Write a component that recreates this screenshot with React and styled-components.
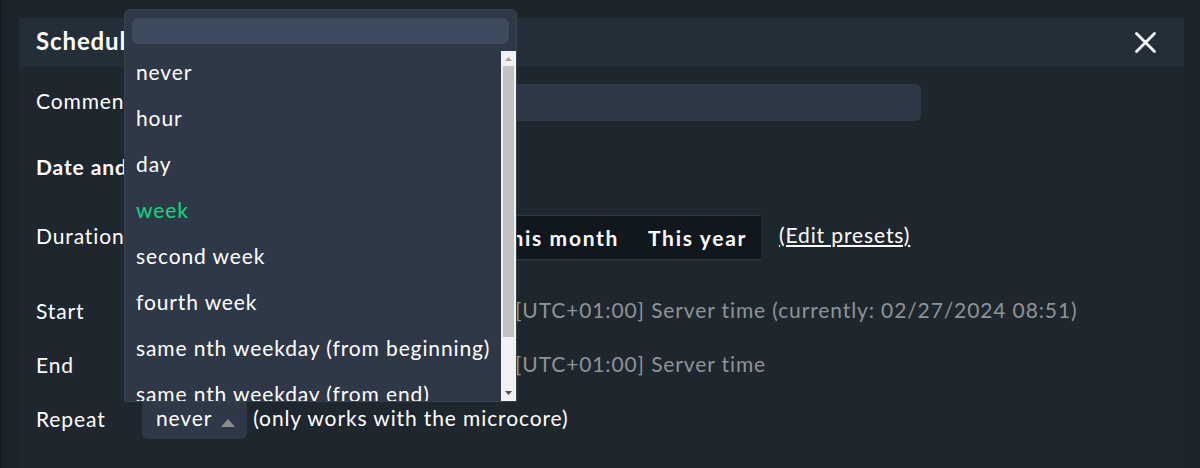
import React, { useState } from "react";
import styled, { createGlobalStyle, css } from "styled-components";

const GlobalStyle = createGlobalStyle`
  *, *::before, *::after { box-sizing: border-box; }
  body {
    margin: 0;
    background: #1c2329;
    color: #ffffff;
    font-family: Lato, "Liberation Sans", sans-serif;
    font-size: 21px;
    line-height: 26px;
  }
  body, button, input { letter-spacing: 0.042em; }
  button, input { font: inherit; color: inherit; }
`;

const Page = styled.main`
  min-height: 100vh;
  display: flex;
  padding: 18px 16px 0 18px;
  border-left: 1px solid #12181e;
`;

const Panel = styled.section`
  flex: 1;
  min-width: 0;
  background: #1f272e;
`;

const Header = styled.header`
  display: flex;
  align-items: center;
  justify-content: space-between;
  height: 49px;
  padding: 0 26px 0 17px;
  background: #242e38;
`;

const Title = styled.h1`
  margin: 0;
  padding-bottom: 4px;
  font-size: 24px;
  font-weight: 700;
`;

const CloseButton = styled.button`
  display: flex;
  padding: 0;
  border: 0;
  background: none;
  cursor: pointer;
`;

const Form = styled.form`
  padding: 8px 17px 22px;
`;

const Row = styled.div`
  display: grid;
  grid-template-columns: 106px 1fr;
  align-items: center;
  height: 54px;
  margin-bottom: ${(p) => p.$gap || 0}px;
  white-space: nowrap;
`;

const Label = styled.label`
  padding-bottom: ${(p) => (p.$raised ? 2 : 0)}px;
`;

const SectionTitle = styled.h2`
  grid-column: 1 / -1;
  margin: 0;
  font-size: 21px;
  font-weight: 700;
`;

const Controls = styled.div`
  display: flex;
  align-items: center;
  min-width: 0;
`;

const TextInput = styled.input`
  width: ${(p) => p.$width}px;
  height: 37px;
  padding: 0 12px;
  border: 0;
  border-radius: 6px;
  background: #2f3847;
`;

const DateFields = styled.div`
  display: flex;
  gap: 8px;
  width: 373px;
`;

const Hint = styled.span`
  padding-bottom: 2px;
  color: ${(p) => (p.$muted ? "#8f9396" : "#ffffff")};
`;

const Presets = styled.div`
  display: flex;
  justify-content: flex-end;
  width: 619px;
  margin-right: 18px;
  border: 1px solid #2c3844;
  border-width: 1px 0;
  background: #10181e;
`;

const Preset = styled.button`
  height: 43px;
  padding: 2px 14px 0 15px;
  border: 0;
  background: none;
  font-weight: 700;
  letter-spacing: 0.08em;
  cursor: pointer;
`;

const PresetLink = styled.a`
  padding-bottom: 4px;
  color: inherit;
  text-decoration: underline;
`;

const Dropdown = styled.div`
  position: relative;
  margin-right: 6px;
`;

const Trigger = styled.button`
  display: flex;
  align-items: center;
  gap: 9px;
  height: 40px;
  padding: 0 12px 2px 14px;
  border: 0;
  border-radius: 6px;
  background: #2f3847;
  cursor: pointer;
`;

const Arrow = styled.svg`
  margin-top: 10px;
`;

const Popup = styled.div`
  position: absolute;
  left: -18px;
  bottom: calc(100% - 3px);
  width: 393px;
  border: 1px solid #36424e;
  border-radius: 6px 6px 0 0;
  background: #2f3847;
`;

const Search = styled.input`
  display: block;
  width: calc(100% - 14px);
  height: 26px;
  margin: 8px 7px 7px;
  padding: 0 8px;
  border: 0;
  border-radius: 6px;
  background: #3e4a5d;
`;

const ListArea = styled.div`
  display: flex;
  height: 350px;
`;

const Options = styled.ul`
  flex: 1;
  margin: 0;
  padding: 0;
  list-style: none;
  overflow: hidden;
  white-space: nowrap;
`;

const Option = styled.li`
  height: 46px;
  padding: 8px 11px;
  cursor: pointer;
  ${(p) => p.$active && css`color: #05dc82;`}
`;

const ScrollBar = styled.div`
  display: flex;
  flex-direction: column;
  justify-content: space-between;
  width: 15px;
  background: #f1f1f1;
`;

const ScrollThumb = styled.div`
  height: 271px;
  margin: 0 2px auto;
  background: #c1c1c1;
`;

const ScrollArrow = styled.svg`
  display: block;
`;

const intervals = [
  "never",
  "hour",
  "day",
  "week",
  "second week",
  "fourth week",
  "same nth weekday (from beginning)",
  "same nth weekday (from end)",
];

const presets = ["2 hours", "Today", "This week", "This month", "This year"];

function RepeatDropdown() {
  const [open, setOpen] = useState(true);
  const [value, setValue] = useState("never");
  const [active, setActive] = useState("week");
  const [query, setQuery] = useState("");

  const choose = (item) => {
    setValue(item);
    setOpen(false);
  };

  return (
    <Dropdown>
      <Trigger
        id="repeat"
        type="button"
        aria-haspopup="listbox"
        aria-expanded={open}
        onClick={() => setOpen(!open)}
      >
        {value}
        <Arrow width="14" height="8" viewBox="0 0 14 8" aria-hidden="true">
          <path d="M7 0L14 8H0Z" fill="#8c8c8c" />
        </Arrow>
      </Trigger>
      {open && (
        <Popup>
          <Search
            type="text"
            aria-label="Search interval"
            value={query}
            onChange={(e) => setQuery(e.target.value)}
          />
          <ListArea>
            <Options role="listbox" aria-label="Repeat">
              {intervals
                .filter((item) => item.includes(query))
                .map((item) => (
                  <Option
                    key={item}
                    role="option"
                    aria-selected={item === value}
                    $active={item === active}
                    onMouseEnter={() => setActive(item)}
                    onClick={() => choose(item)}
                  >
                    {item}
                  </Option>
                ))}
            </Options>
            <ScrollBar aria-hidden="true">
              <ScrollArrow width="15" height="15" viewBox="0 0 15 15">
                <path d="M7.5 6L11 10H4Z" fill="#a3a3a3" />
              </ScrollArrow>
              <ScrollThumb />
              <ScrollArrow width="15" height="15" viewBox="0 0 15 15">
                <path d="M4 5H11L7.5 9Z" fill="#505050" />
              </ScrollArrow>
            </ScrollBar>
          </ListArea>
        </Popup>
      )}
    </Dropdown>
  );
}

export default function App() {
  return (
    <>
      <GlobalStyle />
      <Page>
        <Panel>
          <Header>
            <Title>Schedule</Title>
            <CloseButton type="button" aria-label="Close">
              <svg width="25" height="25" viewBox="0 0 25 25" aria-hidden="true">
                <path
                  d="M3.5 3.5L21.5 21.5M21.5 3.5L3.5 21.5"
                  stroke="#ffffff"
                  strokeWidth="2.8"
                  strokeLinecap="round"
                />
              </svg>
            </CloseButton>
          </Header>
          <Form onSubmit={(e) => e.preventDefault()}>
            <Row $gap={11}>
              <Label htmlFor="comment" $raised>Comment</Label>
              <Controls>
                <TextInput id="comment" type="text" $width={779} />
              </Controls>
            </Row>
            <Row $gap={16}>
              <SectionTitle>Date and time</SectionTitle>
            </Row>
            <Row $gap={20}>
              <Label as="span" $raised>Duration</Label>
              <Controls>
                <Presets>
                  {presets.map((name) => (
                    <Preset key={name} type="button">{name}</Preset>
                  ))}
                </Presets>
                <PresetLink href="#presets">(Edit presets)</PresetLink>
              </Controls>
            </Row>
            <Row>
              <Label htmlFor="start-date">Start</Label>
              <Controls>
                <DateFields>
                  <TextInput id="start-date" type="text" $width={200} />
                  <TextInput type="text" aria-label="Start time" $width={150} />
                </DateFields>
                <Hint $muted>[UTC+01:00] Server time (currently: 02/27/2024 08:51)</Hint>
              </Controls>
            </Row>
            <Row>
              <Label htmlFor="end-date">End</Label>
              <Controls>
                <DateFields>
                  <TextInput id="end-date" type="text" $width={200} />
                  <TextInput type="text" aria-label="End time" $width={150} />
                </DateFields>
                <Hint $muted>[UTC+01:00] Server time</Hint>
              </Controls>
            </Row>
            <Row>
              <Label htmlFor="repeat">Repeat</Label>
              <Controls>
                <RepeatDropdown />
                <Hint>(only works with the microcore)</Hint>
              </Controls>
            </Row>
          </Form>
        </Panel>
      </Page>
    </>
  );
}
